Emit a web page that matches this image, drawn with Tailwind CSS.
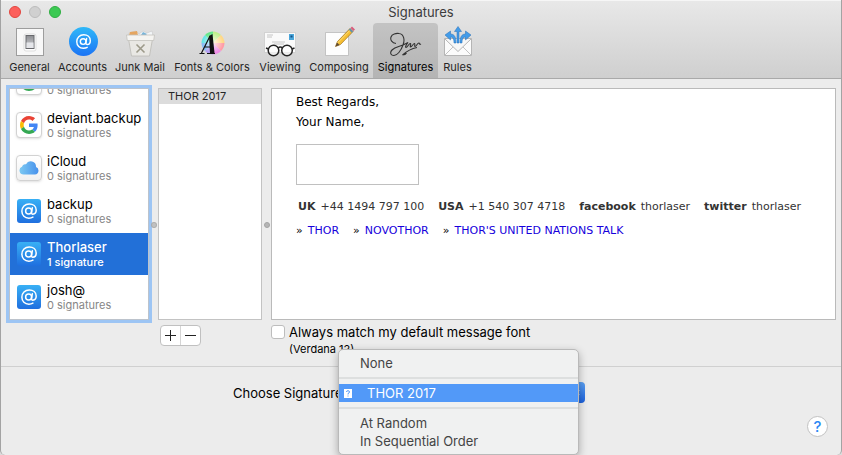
<!DOCTYPE html>
<html lang="en">
<head>
<meta charset="utf-8">
<title>Signatures</title>
<script src="https://cdn.jsdelivr.net/npm/@tailwindcss/browser@4"></script>
</head>
<body class="bg-[#dcdcdc] font-['Inter','Liberation_Sans',sans-serif] text-[13px] leading-[18px] text-black">
<svg class="absolute size-0" aria-hidden="true">
  <defs>
    <linearGradient id="blue" x1="0" y1="0" x2="0" y2="1"><stop offset="0" stop-color="#38b0f5"/><stop offset="1" stop-color="#1f6fdf"/></linearGradient>
    <linearGradient id="round" x1="0" y1="0" x2="0" y2="1"><stop offset="0" stop-color="#2fb8f8"/><stop offset="1" stop-color="#1c74f5"/></linearGradient>
    <linearGradient id="cloud" x1="0" y1="0" x2="1" y2="0"><stop offset="0" stop-color="#7cc9f2"/><stop offset="1" stop-color="#4791ec"/></linearGradient>
    <linearGradient id="switch" x1="0" y1="0" x2="0" y2="1"><stop offset="0" stop-color="#8d8e92"/><stop offset="1" stop-color="#d6d7db"/></linearGradient>
    <radialGradient id="glow"><stop offset="0" stop-color="#fff" stop-opacity=".8"/><stop offset=".9" stop-color="#fff" stop-opacity="0"/></radialGradient>
    <symbol id="google" viewBox="0 0 48 48">
      <path fill="#ea4335" d="M24 9.5c3.54 0 6.71 1.22 9.21 3.6l6.85-6.85C35.9 2.38 30.47 0 24 0 14.62 0 6.51 5.38 2.56 13.22l7.98 6.19C12.43 13.72 17.74 9.5 24 9.5z"/>
      <path fill="#4285f4" d="M46.98 24.55c0-1.57-.15-3.09-.38-4.55H24v9.02h12.94c-.58 2.96-2.26 5.48-4.78 7.18l7.73 6c4.51-4.18 7.09-10.36 7.09-17.65z"/>
      <path fill="#fbbc05" d="M10.53 28.59A14.5 14.5 0 0 1 9.77 24c0-1.6.27-3.14.76-4.59l-7.98-6.19A23.9 23.9 0 0 0 0 24c0 3.88.92 7.54 2.56 10.78l7.97-6.19z"/>
      <path fill="#34a853" d="M24 48c6.48 0 11.93-2.13 15.89-5.81l-7.73-6c-2.15 1.45-4.92 2.3-8.16 2.3-6.26 0-11.57-4.22-13.47-9.91l-7.98 6.19C6.51 42.62 14.62 48 24 48z"/>
    </symbol>
    <symbol id="at" viewBox="0 0 24 24">
      <g fill="none" stroke="#fff" stroke-width="2" stroke-linecap="round"><circle cx="11.500" cy="12" r="4"/><path d="M16.400 7.800l-1 5.700q-.4 2.700 1.700 2.700c2.700 0 4.500-2.500 4.500-5.400C21.600 5.800 17.600 2.500 12.300 2.500 6.600 2.500 2.500 6.700 2.500 12.200s4 9.300 9.300 9.300c2.100 0 3.900-.4 5.400-1.300"/></g>
    </symbol>
  </defs>
</svg>

<div class="flex min-h-screen flex-col overflow-hidden rounded-b-[5px] border-x border-x-[#a3a3a3] bg-[#ececec]">
  <header class="flex h-[79px] flex-col border-t border-b border-t-[#f6f6f6] border-b-[#a9a9a9] bg-linear-to-b from-[#e8e8e8] to-[#cfcfcf]">
    <div class="relative flex h-[22px] shrink-0 items-center justify-center text-[#3c3c3c]">
      <div class="absolute left-2 flex gap-2">
        <button aria-label="Close" class="size-3 rounded-full border border-[#e2463f] bg-[#fc605c]"></button>
        <button aria-label="Minimize" class="size-3 rounded-full border border-[#bcbcbc] bg-[#d0d0d0]"></button>
        <button aria-label="Zoom" class="size-3 rounded-full border border-[#2fae42] bg-[#3cc953]"></button>
      </div>
      <h1>Signatures</h1>
    </div>
    <nav class="flex flex-1 pl-1 text-[11px] leading-[14px] text-[#262626]">
      <button class="flex w-[49px] flex-col items-center gap-0.5 whitespace-nowrap pt-[3px]">
        <svg class="size-8 shrink-0" viewBox="0 0 32 32"><rect x="2.500" y="2.500" width="27" height="27" fill="#f8f8f8" stroke="#9d9d9d"/><rect x="10" y="8" width="12" height="17" rx="2" fill="#fff" stroke="#ddd"/><rect x="12" y="9.500" width="8" height="13" fill="url(#switch)" stroke="#67686c"/><path d="M12.500 16.500h7v5.500h-7z" fill="#e5e6ea"/></svg>General</button>
      <button class="flex w-[57px] flex-col items-center gap-0.5 whitespace-nowrap pt-[3px]">
        <svg class="size-8 shrink-0" viewBox="0 0 32 32"><circle cx="16.500" cy="15.500" r="14.500" fill="url(#round)"/><use href="#at" x="8" y="7" width="17" height="17"/></svg>Accounts</button>
      <button class="flex w-[58px] flex-col items-center gap-0.5 whitespace-nowrap pt-[3px]">
        <svg class="size-8 shrink-0" viewBox="0 0 32 32"><path d="M4 10l1-3 7-2 3 3 4-3 4 2 5-2 1 5z" fill="#f3f6f8" stroke="#c8c8c8" stroke-width=".6"/><path d="M5 9l1-3 7-1 1 4z" fill="#e5a55f"/><path d="M17 9l2-3 4 2-1 1z" fill="#79b4d8"/><path d="M4 10h25l-3.500 20h-18z" fill="#e9e8e4" stroke="#bbbab5" stroke-width=".8"/><path d="M2.500 9h28l-.8 5.500H3.300z" fill="#f5f4f1" stroke="#c3c2bd" stroke-width=".8"/><path d="M12.500 18.500l8 8m0-8l-8 8" stroke="#9c9989" stroke-width="1.600"/></svg>Junk Mail</button>
      <button class="flex w-[86px] flex-col items-center gap-0.5 whitespace-nowrap pt-[3px]">
        <svg class="size-8 shrink-0" viewBox="0 0 32 32">
          <path d="M17 17L17 5.500A11.500 11.500 0 0 1 25 9z" fill="#bff08c"/><path d="M17 17l8-8a11.500 11.500 0 0 1 3.500 8z" fill="#ffd887"/><path d="M17 17h11.500a11.500 11.500 0 0 1-3.500 8z" fill="#ff9ca5"/><path d="M17 17l8 8a11.500 11.500 0 0 1-8 3.500z" fill="#ef8be7"/><path d="M17 17v11.500A11.500 11.500 0 0 1 9 25z" fill="#b29cf3"/><path d="M17 17l-8 8a11.500 11.500 0 0 1-3.500-8z" fill="#86bdf5"/><path d="M17 17H5.500A11.500 11.500 0 0 1 9 9z" fill="#67e5e5"/><path d="M17 17L9 9a11.500 11.500 0 0 1 8-3.500z" fill="#65e78a"/><circle cx="17" cy="17" r="11.500" fill="url(#glow)"/>
          <path d="M3.500 27.500h5M11 27.500h8M5.500 27L14 10M8.500 21h7" fill="none" stroke="#111" stroke-width="1.200"/><path d="M13 10l3.500-2 2 19h-4.500z" fill="#111"/></svg>Fonts &amp; Colors</button>
      <button class="flex w-[50px] flex-col items-center gap-0.5 whitespace-nowrap pt-[3px]">
        <svg class="size-8 shrink-0" viewBox="0 0 32 32"><path d="M.5 6.500h31v20H.5z" fill="#fafafa" stroke="#c7c7c7" stroke-width=".7"/><path d="M3 9h6M3 11h5M8 16h13M10 18h10" stroke="#b8b8b8" stroke-width=".8"/><path d="M25 8h5v6h-5z" fill="#4ba6da"/><path d="M26.500 9.500h2v2h-2z" fill="#145287"/><g fill="#fff" fill-opacity=".6" stroke="#252525" stroke-width="1.500"><circle cx="9.500" cy="24.500" r="5.300"/><circle cx="23" cy="24.500" r="5.300"/><path d="M14 22q2.300-2 4.500 0M4.500 23L2 22M28 23l2.500-1" fill="none"/></g></svg>Viewing</button>
      <button class="flex w-[68px] flex-col items-center gap-0.5 whitespace-nowrap pt-[3px]">
        <svg class="size-8 shrink-0" viewBox="0 0 32 32"><path d="M2.500 6.500h23v23h-23z" fill="#fdfdfd" stroke="#b9b9b9" stroke-width=".8"/><path d="M12.500 20.500l2-5L27 2.500l3 3L17.500 18.500z" fill="#f5bd31" stroke="#9d701c" stroke-width=".7"/><path d="M14.500 17L27.800 3.500" stroke="#ffe07a"/><path d="M12.500 20.500l1.500-4 2.500 2.500z" fill="#5c4935"/><path d="M26.500 3l3 3" stroke="#6690aa" stroke-width="2"/><path d="M27.500 2l1.500-1.500 3 3L30.500 5z" fill="#d95d7c"/></svg>Composing</button>
      <button aria-pressed="true" class="flex w-[65px] flex-col items-center gap-0.5 whitespace-nowrap rounded-t bg-black/13 pt-[3px] text-black">
        <svg class="size-8 shrink-0" viewBox="0 0 32 32"><path d="M6 17.500C2 17 0 14 1 11 2 8 6 7 9 7.500 14 8 15 14 13 19 11 25 7 29.500 4 29.500 0 29.500 0 26 2 24 5 21 10 20.500 13 19L18 16.500C16 19 15 21 16 21.500 17.500 21.500 19 17 20.500 17.500 21.500 18 19.500 20.500 20.500 21 22 21 23.500 17 24.500 17.500 25.500 18 24 20 25 20.500 26.500 20.500 27.500 16.500 29 17 30 17.500 29 19 31 18M12.500 29C17 25 22 22.500 27 21.500M12.500 29q3 0 4-2" fill="none" stroke="#343434" stroke-width="1.100"/></svg>Signatures</button>
      <button class="flex w-[39px] flex-col items-center gap-0.5 whitespace-nowrap pt-[3px]">
        <svg class="size-8 shrink-0" viewBox="0 0 32 32"><path d="M2.500 12.500h27v17h-27z" fill="#fbfbfb" stroke="#b5b5b5"/><path d="M3 29l10-10M29 29L19 19" stroke="#c3c3c3"/><path d="M3 13l13 12.500L29 13" fill="#f7f7f7" stroke="#b5b5b5"/><g fill="#439ce9" stroke="#286eb4" stroke-width=".5"><path d="M15 17V5.500H12.500L16 .5l3.500 5H17v11.500z"/><path d="M12 17c0-4-1-6-3.500-6v3L3 9l5.500-4v3C13 8 14 12 14 17zM20 17c0-4 1-6 3.500-6v3L29 9l-5.500-4v3C19 8 18 12 18 17z"/></g></svg>Rules</button>
    </nav>
  </header>

  <main class="flex flex-1 pt-[9px] pr-[5px] pb-1 pl-2">
    <section class="flex w-[140px] flex-col pb-[42px]" aria-label="Accounts">
      <ul class="flex h-0 grow flex-col justify-end gap-px overflow-hidden border border-[#bcc3cc] bg-white pb-px ring-3 ring-[#9dc5f4]">
        <li class="flex h-[42px] shrink-0 items-center gap-[5px] pl-1.5">
          <span class="flex size-[26px] items-center justify-center rounded border border-[#d2d2d2] bg-white shadow-sm"><svg class="size-[18px]"><use href="#google"/></svg></span>
          <span class="flex flex-col"><span class="h-4"></span><span class="text-[11px] leading-[14px] text-[#868686]">0 signatures</span></span>
        </li>
        <li class="flex h-[42px] shrink-0 items-center gap-[5px] pl-1.5">
          <span class="flex size-[26px] items-center justify-center rounded border border-[#d2d2d2] bg-white shadow-sm"><svg class="size-[18px]"><use href="#google"/></svg></span>
          <span class="flex flex-col"><span class="leading-4">deviant.backup</span><span class="text-[11px] leading-[14px] text-[#868686]">0 signatures</span></span>
        </li>
        <li class="flex h-[42px] shrink-0 items-center gap-[5px] pl-1.5">
          <span class="flex size-[26px] items-center justify-center rounded border border-[#d2d2d2] bg-linear-to-b from-white to-[#f1f1f1] shadow-sm"><svg class="h-3.5 w-5" viewBox="0 0 20 14"><path d="M4.500 13.500a4 4 0 0 1-1.500-7.700A3.300 3.300 0 0 1 7 3.300 5.300 5.300 0 0 1 17 6a3.900 3.900 0 0 1-1 7.500z" fill="url(#cloud)"/></svg></span>
          <span class="flex flex-col"><span class="leading-4">iCloud</span><span class="text-[11px] leading-[14px] text-[#868686]">0 signatures</span></span>
        </li>
        <li class="flex h-[42px] shrink-0 items-center gap-[5px] pl-1.5">
          <svg class="size-[26px]" viewBox="0 0 26 26"><rect x="1" y="1" width="24" height="24" rx="3" fill="url(#blue)"/><use href="#at" x="4" y="4" width="18" height="18"/></svg>
          <span class="flex flex-col"><span class="leading-4">backup</span><span class="text-[11px] leading-[14px] text-[#868686]">0 signatures</span></span>
        </li>
        <li class="flex h-[42px] shrink-0 items-center gap-[5px] bg-[#2270d8] pl-1.5 text-white">
          <svg class="size-[26px]" viewBox="0 0 26 26"><rect x="1" y="1" width="24" height="24" rx="3" fill="url(#blue)"/><use href="#at" x="4" y="4" width="18" height="18"/></svg>
          <span class="flex flex-col font-medium"><span class="leading-4">Thorlaser</span><span class="text-[11px] leading-[14px]">1 signature</span></span>
        </li>
        <li class="flex h-[42px] shrink-0 items-center gap-[5px] pl-1.5">
          <svg class="size-[26px]" viewBox="0 0 26 26"><rect x="1" y="1" width="24" height="24" rx="3" fill="url(#blue)"/><use href="#at" x="4" y="4" width="18" height="18"/></svg>
          <span class="flex flex-col"><span class="leading-4">josh@</span><span class="text-[11px] leading-[14px] text-[#868686]">0 signatures</span></span>
        </li>
      </ul>
    </section>
    <div class="z-1 flex w-[9px] items-center justify-center"><span class="size-1.5 rounded-full border border-[#a4a4a4]/70 bg-[#b5b5b5]/80"></span></div>
    <section class="flex w-[104px] flex-col" aria-label="Signature list">
      <ul class="flex-1 border border-[#c3c3c3] bg-white">
        <li class="bg-[#dcdcdc] pl-[9px] text-[11px] leading-[15px] text-[#262626]">THOR 2017</li>
      </ul>
      <div class="h-[42px] pt-[5px] pl-0.5">
        <div class="flex h-[21px] w-[41px] divide-x divide-[#d5d5d5] rounded border border-[#c0c0c0] bg-white">
          <button aria-label="Add signature" class="flex flex-1 items-center justify-center"><svg class="size-[11px]" viewBox="0 0 11 11"><path d="M0 5.500h11M5.500 0v11" stroke="#222"/></svg></button>
          <button aria-label="Remove signature" class="flex flex-1 items-center justify-center"><svg class="size-[11px]" viewBox="0 0 11 11"><path d="M0 5.500h11" stroke="#222"/></svg></button>
        </div>
      </div>
    </section>
    <div class="flex w-[9px] items-center justify-center"><span class="size-1.5 rounded-full border border-[#a4a4a4] bg-[#b5b5b5]"></span></div>
    <section class="flex min-w-0 flex-1 flex-col" aria-label="Signature preview">
      <div class="flex-1 border border-[#bababa] bg-white pt-[3px] pl-6 font-['Verdana','DejaVu_Sans',sans-serif] text-[12px] leading-5">
        <p>Best Regards,</p>
        <p>Your Name,</p>
        <div class="mt-3 h-[41px] w-[123px] border border-[#c0c0c0]"></div>
        <div class="mt-[13px] flex gap-3.5 pl-0.5 text-[11px] leading-[18px] whitespace-nowrap text-[#333]">
          <span class="flex gap-[5px]"><b>UK</b> +44 1494 797 100</span>
          <span class="flex gap-[5px]"><b>USA</b> +1 540 307 4718</span>
          <span class="flex gap-[5px]"><b>facebook</b> thorlaser</span>
          <span class="flex gap-[5px]"><b>twitter</b> thorlaser</span>
        </div>
        <div class="mt-1.5 flex gap-3.5 text-[11px] leading-[18px] whitespace-nowrap">
          <span class="flex gap-[5px]">» <a href="#" class="text-[#1700dc]">THOR</a></span>
          <span class="flex gap-[5px]">» <a href="#" class="text-[#1700dc]">NOVOTHOR</a></span>
          <span class="flex gap-[5px]">» <a href="#" class="text-[#1700dc]">THOR'S UNITED NATIONS TALK</a></span>
        </div>
      </div>
      <div class="h-[42px] pt-[3px]">
        <div class="flex items-center gap-1">
          <input id="match" type="checkbox" class="size-3.5 appearance-none rounded-[3px] border border-[#bdbdbd] bg-white">
          <label for="match">Always match my default message font</label>
        </div>
        <p class="pl-[18px] text-[11px] leading-4">(Verdana 12)</p>
      </div>
    </section>
  </main>

  <footer class="flex h-[89px] items-start border-t border-[#d0d0d0] pr-[13px]">
    <div class="flex flex-1 items-center pt-[15px] pl-[232px]">
      <label for="choose" class="w-[105px] shrink-0 whitespace-nowrap">Choose Signature:</label>
      <div class="relative w-[247px]">
        <select id="choose" class="block h-[21px] w-full appearance-none rounded border border-[#c4c4c4] bg-white pl-4"><option>THOR 2017</option></select>
        <span class="pointer-events-none absolute inset-y-0 right-0 flex w-[18px] items-center justify-center rounded-r bg-linear-to-b from-[#5a9ff2] to-[#1c61dd]"><svg class="h-[11px] w-[7px]" viewBox="0 0 7 11"><path d="M1 4l2.500-3L6 4M1 7l2.500 3L6 7" fill="none" stroke="#fff" stroke-width="1.400"/></svg></span>
        <div role="menu" class="absolute -top-[33px] left-0 w-[241px] rounded-[5px] border border-[#b9b9b9] bg-[#f0f1f1] py-1 text-[#444] shadow-[0_3px_9px_rgba(0,0,0,0.3)]">
          <button role="menuitem" class="block w-full pl-[21px] text-left">None</button>
          <div class="my-[5px] h-0.5 bg-[#dddfdf]"></div>
          <button role="menuitem" class="flex w-full items-center bg-[#5299f8] pl-[5px] text-left text-white"><svg class="mr-[15px] h-[9px] w-2" viewBox="0 0 8 9"><path d="M0 0h8v9H0z" fill="#fff"/><path d="M2.500 3q0-1.300 1.500-1.300T5.500 3Q5.500 4 4 4.500V5.500M4 6.500v1" fill="none" stroke="#5299f8"/></svg>THOR 2017</button>
          <div class="my-[5px] h-0.5 bg-[#dddfdf]"></div>
          <button role="menuitem" class="block w-full pl-[21px] text-left">At Random</button>
          <button role="menuitem" class="block w-full pl-[21px] text-left">In Sequential Order</button>
        </div>
      </div>
    </div>
    <button aria-label="Help" class="mt-[49px] size-[21px] rounded-full border border-[#c2c2c2] bg-white text-[15px] leading-[19px] font-medium text-[#2d88f3]">?</button>
  </footer>
</div>
</body>
</html>
